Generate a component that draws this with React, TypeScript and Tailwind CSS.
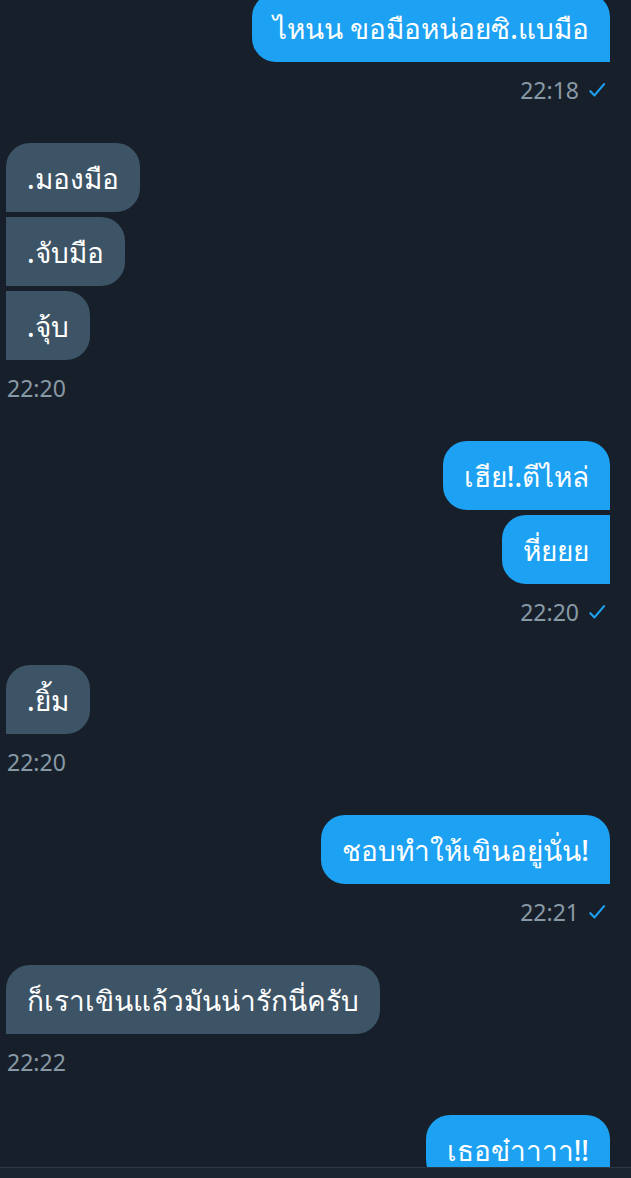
import React from "react";

type Msg = { text: string };
type Group = { side: "in" | "out"; time: string; msgs: Msg[] };

const groups: Group[] = [
  { side: "out", time: "22:18", msgs: [{ text: "ไหนน ขอมือหน่อยซิ.แบมือ" }] },
  {
    side: "in",
    time: "22:20",
    msgs: [{ text: ".มองมือ" }, { text: ".จับมือ" }, { text: ".จุ้บ" }],
  },
  {
    side: "out",
    time: "22:20",
    msgs: [{ text: "เฮีย!.ตีไหล่" }, { text: "หี่ยยย" }],
  },
  { side: "in", time: "22:20", msgs: [{ text: ".ยิ้ม" }] },
  { side: "out", time: "22:21", msgs: [{ text: "ชอบทำให้เขินอยู่นั่น!" }] },
  { side: "in", time: "22:22", msgs: [{ text: "ก็เราเขินแล้วมันน่ารักนี่ครับ" }] },
  { side: "out", time: "", msgs: [{ text: "เธอข๋าาาา!!" }] },
];

const Check = () => (
  <svg width="20" height="20" viewBox="0 0 24 24" className="text-[#1da1f2]">
    <path
      d="M4 13.5l5 5L20.5 5"
      fill="none"
      stroke="currentColor"
      strokeWidth="2.6"
      strokeLinecap="round"
      strokeLinejoin="round"
    />
  </svg>
);

const Bubble = ({
  text,
  side,
  first,
}: {
  text: string;
  side: "in" | "out";
  first: boolean;
}) => {
  const corners =
    side === "out"
      ? first
        ? "rounded-l-[24px] rounded-tr-[24px]"
        : "rounded-l-[24px]"
      : first
        ? "rounded-r-[24px] rounded-tl-[24px]"
        : "rounded-r-[24px]";
  const colour = side === "out" ? "bg-[#1da1f2]" : "bg-[#3d5466]";
  return (
    <div
      className={`h-[69px] flex items-center px-[21px] text-[28px] font-medium text-white leading-none whitespace-nowrap ${corners} ${colour}`}
    >
      {text}
    </div>
  );
};

export default function App() {
  return (
    <div
      className="relative w-[631px] h-[1178px] overflow-hidden bg-[#17202a]"
      style={{ fontFamily: '"Noto Sans", "DejaVu Sans", sans-serif' }}
    >
      <div className="flex flex-col pl-[6px] pr-[21px] -mt-[7px]">
        {groups.map((g, gi) => (
          <div
            key={gi}
            className={`flex flex-col ${g.side === "out" ? "items-end" : "items-start"} ${gi > 0 ? "mt-[39px]" : ""}`}
          >
            <div
              className={`flex flex-col gap-[5px] ${g.side === "out" ? "items-end" : "items-start"}`}
            >
              {g.msgs.map((m, mi) => (
                <Bubble key={mi} text={m.text} side={g.side} first={mi === 0} />
              ))}
            </div>
            {g.time && (
              <div
                className={`mt-[14px] h-[28px] flex items-center gap-[8px] text-[23px] text-[#8899a6] ${g.side === "out" ? "pr-[3px]" : "pl-[1px]"}`}
              >
                <span>{g.time}</span>
                {g.side === "out" && <Check />}
              </div>
            )}
          </div>
        ))}
      </div>
      <div className="absolute left-0 right-0 bottom-0 h-[11px] bg-[#1b2530] border-t border-[#2c3844]" />
    </div>
  );
}
